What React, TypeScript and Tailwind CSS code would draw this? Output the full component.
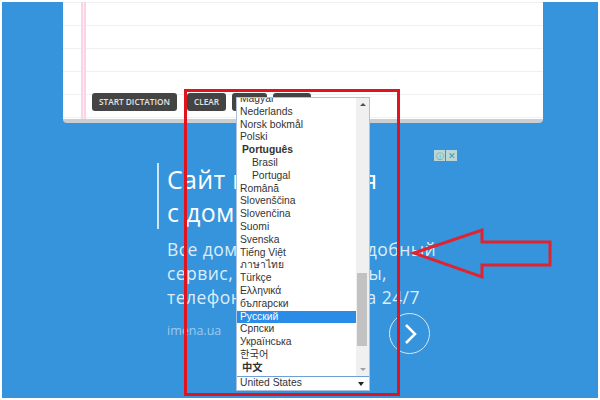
const languages = [
  { label: "Nederlands" },
  { label: "Norsk bokmål" },
  { label: "Polski" },
  { label: "Português", group: true },
  { label: "Brasil", child: true },
  { label: "Portugal", child: true },
  { label: "Română" },
  { label: "Slovenščina" },
  { label: "Slovenčina" },
  { label: "Suomi" },
  { label: "Svenska" },
  { label: "Tiếng Việt" },
  { label: "ภาษาไทย" },
  { label: "Türkçe" },
  { label: "Ελληνικά" },
  { label: "български" },
  { label: "Русский", selected: true },
  { label: "Српски" },
  { label: "Українська" },
  { label: "한국어" },
  { label: "中文", group: true },
];

const LanguageSelect = () => (
  <div className="absolute left-[236px] top-[97px] w-[134px] h-[294px] bg-white border border-[#a9c3e0] flex flex-col overflow-hidden font-['Liberation_Sans','Noto_Sans_CJK_KR',sans-serif] text-[10.3px] leading-[12.8px] text-[#333]">
    <div className="flex h-[278px] shrink-0">
      <div className="w-[119px] overflow-hidden">
        <div className="-mt-[5px]">
          <div className="pl-[3px] h-[12.8px]">Magyar</div>
          {languages.map(({ label, group, child, selected }) => (
            <div
              key={label}
              className={`h-[12.8px] whitespace-nowrap ${group ? "pl-[5px] font-bold" : child ? "pl-[15px]" : "pl-[3px]"} ${selected ? "bg-[#2b8ce8] text-white" : ""}`}
            >
              {label}
            </div>
          ))}
        </div>
      </div>
      {/* scrollbar */}
      <div className="w-[13px] bg-[#f0f0f0] flex flex-col items-center justify-between py-[5px] relative">
        <div className="w-0 h-0 border-x-[3px] border-x-transparent border-b-[3px] border-b-[#505050]" />
        <div className="absolute left-[1px] top-[175px] w-[10px] h-[73px] bg-[#c2c2c2]" />
        <div className="w-0 h-0 border-x-[3px] border-x-transparent border-t-[3px] border-t-[#a0a0a0]" />
      </div>
    </div>
    <div className="h-[14px] border-t border-[#6f9fd8] flex items-center justify-between pl-[3px] pr-[5px]">
      <span>United States</span>
      <span className="w-0 h-0 border-x-[3px] border-x-transparent border-t-[4px] border-t-[#222]" />
    </div>
  </div>
);

export default function App() {
  return (
    <div className="relative w-[600px] h-[400px] overflow-hidden bg-white font-['Open_Sans',sans-serif]">
      <div className="mx-[2px] mt-[2px] h-[396px] bg-[#3594dc] overflow-hidden">
        {/* Notepad */}
        <div className="ml-[61px] w-[480px] h-[121px] border-b-[4px] border-[#c9ced2] rounded-b-[4px] relative bg-white bg-[repeating-linear-gradient(to_bottom,#eef0f3_0,#eef0f3_1px,transparent_1px,transparent_23px)]">
          <div className="absolute left-[18px] top-0 bottom-0 w-[5px] border-x-2 border-[#fad5e5] bg-[#fdeef4]" />
          <div className="absolute left-[29px] top-[91px] flex text-[8.3px] font-semibold text-[#e4e4e4]">
            <div className="h-[18px] w-[85px] rounded-[3px] bg-[#444] flex items-center justify-center">START DICTATION</div>
            <div className="h-[18px] w-[39px] rounded-[3px] bg-[#444] ml-[10px] flex items-center justify-center">CLEAR</div>
            <div className="h-[18px] w-[35px] rounded-[3px] bg-[#444] ml-[6px]" />
            <div className="h-[18px] w-[38px] rounded-[3px] bg-[#444] ml-[6px]" />
          </div>
        </div>

        {/* Ad */}
        <div className="relative text-white">
          <div className="absolute left-[432px] top-[27px] flex gap-[1px]">
            <div className="w-[11px] h-[11px] bg-[#b9d6d8] text-[#3fa8b0] text-[8px] leading-[11px] text-center">ⓘ</div>
            <div className="w-[11px] h-[11px] bg-[#b9d6d8] text-[#3f98a8] text-[9px] leading-[11px] text-center">✕</div>
          </div>
          <div className="ml-[155px] pt-[40px]">
            <div className="border-l-2 border-[#cfe6f6] pl-[8px] h-[66px] text-[25px] leading-[33px] tracking-[0.3px] whitespace-nowrap">
              <div>Сайт начинается</div>
              <div>с домена</div>
            </div>
            <div className="mt-[8px] ml-[10px] text-[17.5px] leading-[24px] text-[#dcedfa] tracking-[0.45px] whitespace-nowrap">
              <div>Все домены и самый удобный</div>
              <div>сервис, хостинг и сайты,</div>
              <div>телефонная поддержка 24/7</div>
            </div>
            <div className="mt-[13px] ml-[10px] text-[12.5px] text-[#9dcbee]">imena.ua</div>
          </div>
          <div className="absolute left-[387px] top-[190px] w-[41px] h-[41px] rounded-full border border-[#d5e9f8] flex items-center justify-center">
            <svg width="16" height="22" viewBox="0 0 16 22" fill="none" stroke="white" strokeWidth="2.5">
              <path d="M4 2l9 9-9 9" />
            </svg>
          </div>
        </div>
      </div>

      <LanguageSelect />

      {/* annotation */}
      <div className="absolute left-[184px] top-[89px] w-[216px] h-[307px] border-[3px] border-[#e0131f]" />
      <svg className="absolute left-[410px] top-[225px]" width="146" height="56" viewBox="0 0 146 56" fill="none" stroke="#e0232f" strokeWidth="3">
        <path d="M4 28L72 5v12h68v23H72v12z" />
      </svg>
    </div>
  );
}
